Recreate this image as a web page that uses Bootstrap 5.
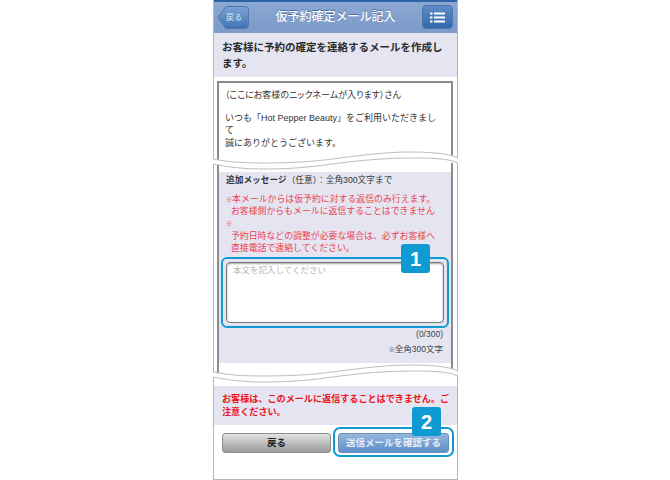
<!DOCTYPE html>
<html lang="ja">
<head>
  <meta charset="UTF-8">
  <meta name="viewport" content="width=device-width, initial-scale=1.0">
  <title>仮予約確定メール記入</title>
  <link href="https://cdn.jsdelivr.net/npm/bootstrap@5.3.3/dist/css/bootstrap.min.css" rel="stylesheet">
  <style>
    body {
      background: #fff;
      font-family: "Liberation Sans", "Noto Sans CJK JP", sans-serif;
      color: #333;
    }

    .phone {
      width: 245px;
      height: 480px;
      margin-left: 213px;
      border: solid #b5b5b5;
      border-width: 0 1px 1px;
    }

    .topbar {
      height: 33px;
      border-top: 2px solid #2b63a5;
      background: linear-gradient(#8aa8d2, #7b9aca);
      padding: 3px 4px 0 3px;
    }

    .topbar-title {
      color: #fff;
      font-size: 12px;
      font-weight: 500;
      line-height: 24px;
      text-shadow: 0 -1px 0 #4e6f9f;
    }

    .back-btn {
      position: relative;
      width: 32px;
      height: 24px;
      margin-top: 1px;
      color: #dfe8f4;
      font-size: 8px;
      padding-left: 9px;
    }

    .back-shape {
      position: absolute;
      top: 0;
      left: 0;
    }

    .back-text {
      position: relative;
    }

    .menu-btn {
      width: 31px;
      height: 24px;
      background: linear-gradient(#5f8cc6, #2f69ad);
      border: 1px solid #4f75a6;
      border-radius: 4px;
    }

    .lede {
      height: 44px;
      background: #e5e5f2;
      padding: 7px 9px 0 8px;
      font-size: 10.5px;
      font-weight: 700;
      line-height: 15.5px;
      color: #2b2b2b;
    }

    .mail-box {
      margin: 4px 4px 0 3px;
      height: 79px;
      padding: 6px 6px;
      border: solid #8b8b8b;
      border-width: 2px 2px 0;
      font-size: 9px;
      line-height: 12.4px;
      overflow: hidden;
    }

    .mail-name {
      margin-bottom: 10.6px;
      font-feature-settings: "palt";
    }

    .tear {
      display: block;
      position: relative;
      z-index: 1;
      width: 245px;
      height: 22px;
      margin: -10px 0 0 -1px;
    }

    .form-wrap {
      margin: -9px 4px 0 3px;
      height: 210px;
      padding-top: 9px;
      border: solid #8b8b8b;
      border-width: 0 2px;
    }

    .form-panel {
      height: 191px;
      background: #e5e5f2;
      padding: 2px 2px 0 2px;
    }

    .opt-label {
      font-size: 8.7px;
      line-height: 12px;
      padding-left: 5px;
    }

    .opt-label b {
      font-weight: 700;
    }

    .warn-list {
      color: #ee3f4e;
      font-size: 8.9px;
      line-height: 12.2px;
      padding: 7px 0 0 5px;
      margin: 0;
    }

    .warn-list .indent {
      padding-left: 5px;
    }

    .warn-list .mk {
      font-size: 6px;
      line-height: 0;
    }

    .ring {
      position: relative;
      margin-top: 3px;
      border: 2px solid #0f9bd2;
      border-radius: 6px;
      padding: 3px;
    }

    .mail-input {
      height: 61px;
      background: #fff;
      border: 1px solid #777;
      box-shadow: inset 0 1px 2px rgba(0, 0, 0, .35);
      border-radius: 4px;
      font-size: 8.5px;
      color: #b5b5b5;
      padding: 1px 6px;
      line-height: 12px;
    }

    .step-tag {
      position: absolute;
      width: 29px;
      height: 29px;
      background: #0f9bd2;
      border-radius: 3px;
      color: #fff;
      font-family: "Liberation Sans", sans-serif;
      font-size: 20px;
      font-weight: 700;
    }

    .step-one {
      top: -15px;
      right: 17px;
    }

    .step-two {
      top: -22px;
      right: 11px;
    }

    .char-count {
      font-size: 8.5px;
      color: #444;
      padding-right: 6px;
      line-height: 12px;
    }

    .char-note {
      font-size: 8.5px;
      color: #444;
      padding: 3px 6px 0 0;
      line-height: 12px;
    }

    .char-note .mk {
      font-size: 6px;
      line-height: 0;
    }

    .caution {
      height: 39px;
      margin-top: 1px;
      background: #e5e5f2;
      color: #f01020;
      font-size: 9.1px;
      font-weight: 700;
      line-height: 12.5px;
      padding: 7px 4px 0 8px;
    }

    .actions {
      padding: 2px 3px 0 8px;
    }

    .ghost-btn {
      width: 109px;
      height: 20px;
      margin-top: 6px;
      background: linear-gradient(#e2e2e2, #9a9a9a);
      border: 1px solid #8f8f8f;
      border-radius: 3px;
      color: #222;
      font-size: 9.5px;
      font-weight: 700;
    }

    .send-ring {
      position: relative;
      border: 2px solid #0f9bd2;
      border-radius: 7px;
      padding: 4px 3px 2px;
    }

    .send-btn {
      width: 111px;
      height: 20px;
      background: linear-gradient(#94b6de, #5f8fc8);
      border: 1px solid #6c8fbc;
      border-radius: 3px;
      color: #e6eef8;
      font-size: 9.5px;
      font-weight: 700;
    }
  </style>
</head>

<body>
  <div class="phone">
    <div class="topbar d-flex align-items-start justify-content-between">
      <div class="back-btn d-flex align-items-center">
        <svg class="back-shape" width="32" height="24" viewBox="0 0 32 24">
          <defs>
            <linearGradient id="backFill" x1="0" y1="0" x2="0" y2="1">
              <stop offset="0" stop-color="#7ea4d6"/>
              <stop offset="1" stop-color="#3f72b4"/>
            </linearGradient>
          </defs>
          <path d="M9 .5H28Q31.500 .5 31.500 4V19Q31.500 22.500 28 22.500H9L.7 11.500Z" fill="url(#backFill)" stroke="#4f75a6"/>
        </svg>
        <span class="back-text">戻る</span>
      </div>
      <div class="topbar-title">仮予約確定メール記入</div>
      <div class="menu-btn d-flex align-items-center justify-content-center">
        <svg width="15" height="11" viewBox="0 0 15 11">
          <g fill="#fff">
            <rect x="0" y="0.500" width="2.500" height="2"/>
            <rect x="4" y="0.500" width="11" height="2"/>
            <rect x="0" y="4.500" width="2.500" height="2"/>
            <rect x="4" y="4.500" width="11" height="2"/>
            <rect x="0" y="8.500" width="2.500" height="2"/>
            <rect x="4" y="8.500" width="11" height="2"/>
          </g>
        </svg>
      </div>
    </div>

    <div class="lede">お客様に予約の確定を連絡するメールを作成します。</div>

    <div class="mail-box">
      <div class="mail-name">（ここにお客様のニックネームが入ります）さん</div>
      いつも「Hot Pepper Beauty」をご利用いただきまし<br>て<br>
      誠にありがとうございます。
    </div>

    <svg class="tear" viewBox="0 0 245 22">
      <path d="M0 9C15 12 30 13 50 13C85 13 105 11 127 8C150 5 175 2 197 2C215 2 235 3 245 8V13C235 8 215 8 197 8C175 8 150 10 127 13C105 16 85 19 50 19C30 19 15 17 0 14Z" fill="#fff"/>
      <path d="M0 9C15 12 30 13 50 13C85 13 105 11 127 8C150 5 175 2 197 2C215 2 235 3 245 8M0 14C15 17 30 19 50 19C85 19 105 16 127 13C150 10 175 8 197 8C215 8 235 8 245 13" fill="none" stroke="#bdbdbd"/>
    </svg>

    <div class="form-wrap">
      <div class="form-panel">
        <div class="opt-label"><b>追加メッセージ</b>（任意）：全角300文字まで</div>
        <div class="warn-list">
          <div><span class="mk">※</span>本メールからは仮予約に対する返信のみ行えます。</div>
          <div class="indent">お客様側からもメールに返信することはできません</div>
          <div><span class="mk">※</span></div>
          <div class="indent">予約日時などの調整が必要な場合は、必ずお客様へ</div>
          <div class="indent">直接電話で連絡してください。</div>
        </div>
        <div class="ring">
          <div class="step-tag step-one d-flex align-items-center justify-content-center">1</div>
          <div class="mail-input">本文を記入してください</div>
        </div>
        <div class="char-count text-end">(0/300)</div>
        <div class="char-note text-end"><span class="mk">※</span>全角300文字</div>
      </div>
    </div>

    <svg class="tear" viewBox="0 0 245 22">
      <path d="M0 9C15 12 30 13 50 13C85 13 105 11 127 8C150 5 175 2 197 2C215 2 235 3 245 8V13C235 8 215 8 197 8C175 8 150 10 127 13C105 16 85 19 50 19C30 19 15 17 0 14Z" fill="#fff"/>
      <path d="M0 9C15 12 30 13 50 13C85 13 105 11 127 8C150 5 175 2 197 2C215 2 235 3 245 8M0 14C15 17 30 19 50 19C85 19 105 16 127 13C150 10 175 8 197 8C215 8 235 8 245 13" fill="none" stroke="#bdbdbd"/>
    </svg>

    <div class="caution">お客様は、このメールに返信することはできません。ご注意ください。</div>

    <div class="actions d-flex justify-content-between align-items-start">
      <div class="ghost-btn d-flex align-items-center justify-content-center">戻る</div>
      <div class="send-ring">
        <div class="step-tag step-two d-flex align-items-center justify-content-center">2</div>
        <div class="send-btn d-flex align-items-center justify-content-center">送信メールを確認する</div>
      </div>
    </div>
  </div>

  <script src="https://cdn.jsdelivr.net/npm/bootstrap@5.3.3/dist/js/bootstrap.bundle.min.js"></script>
</body>

</html>
